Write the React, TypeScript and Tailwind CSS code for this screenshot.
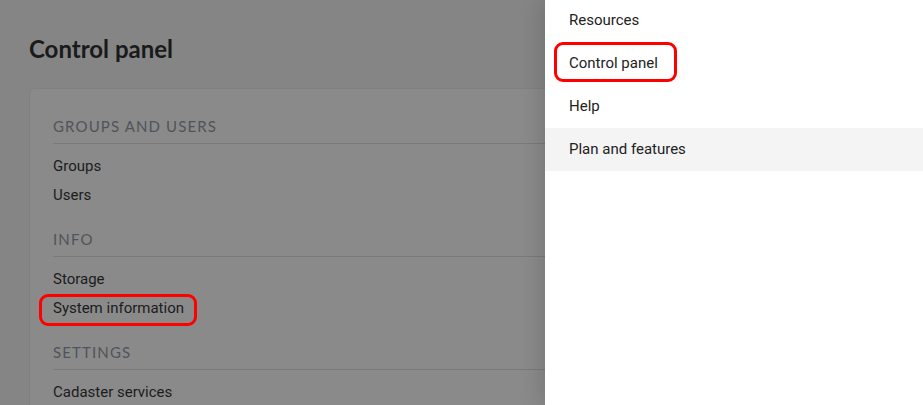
const sections = [
  { title: 'Groups and users', items: ['Groups', 'Users'] },
  { title: 'Info', items: ['Storage', 'System information'] },
  { title: 'Settings', items: ['Cadaster services'] },
]

const menu = ['Resources', 'Control panel', 'Help', 'Plan and features']

function Outline({ className }: { className: string }) {
  return <span className={`pointer-events-none absolute rounded-[9px] border-[3px] border-[#ff0000] ${className}`} />
}

export default function App() {
  return (
    <div className="relative h-[405px] w-full overflow-hidden bg-[#858585]">
      <div className="pl-[29px] pt-[33px]">
        <h1 className="font-['Lato',sans-serif] text-[24px] font-bold leading-[32px] text-[#1a1a1a]">
          Control panel
        </h1>
        <div className="mt-[23px] rounded-tl-[6px] border-l border-t border-[#808080] bg-[#8a8a8a] pl-[23px] pt-[27px]">
          {sections.map((section, i) => (
            <div key={section.title} className={i > 0 ? 'mt-[19px]' : ''}>
              <div className="border-b border-[#7a7a7a] pb-[7px]">
                <h2 className="font-['Lato',sans-serif] text-[15px] uppercase leading-5 tracking-[0.075em] text-[#50545a]">
                  {section.title}
                </h2>
              </div>
              <ul className="mt-2">
                {section.items.map(item => (
                  <li key={item} className="h-[29px]">
                    <span className="relative inline-block font-['Roboto',sans-serif] text-[15px] leading-[29px] text-[#1c1c1c]">
                      {item}
                      {item === 'System information' && <Outline className="-left-[14px] -right-[13px] top-0 -bottom-[3px]" />}
                    </span>
                  </li>
                ))}
              </ul>
            </div>
          ))}
        </div>
      </div>

      <div className="absolute right-0 top-0 h-full w-[378px] bg-white shadow-[-6px_0_18px_rgba(0,0,0,0.12)]">
        <ul className="-mt-px">
          {menu.map(item => (
            <li
              key={item}
              className={`relative flex h-[43px] items-center pl-6 font-['Roboto',sans-serif] text-[15px] text-[#222] ${item === 'Plan and features' ? 'bg-[#f4f4f4]' : ''}`}
            >
              {item}
              {item === 'Control panel' && <Outline className="left-[9px] top-0 h-[40px] w-[123px]" />}
            </li>
          ))}
        </ul>
      </div>
    </div>
  )
}
